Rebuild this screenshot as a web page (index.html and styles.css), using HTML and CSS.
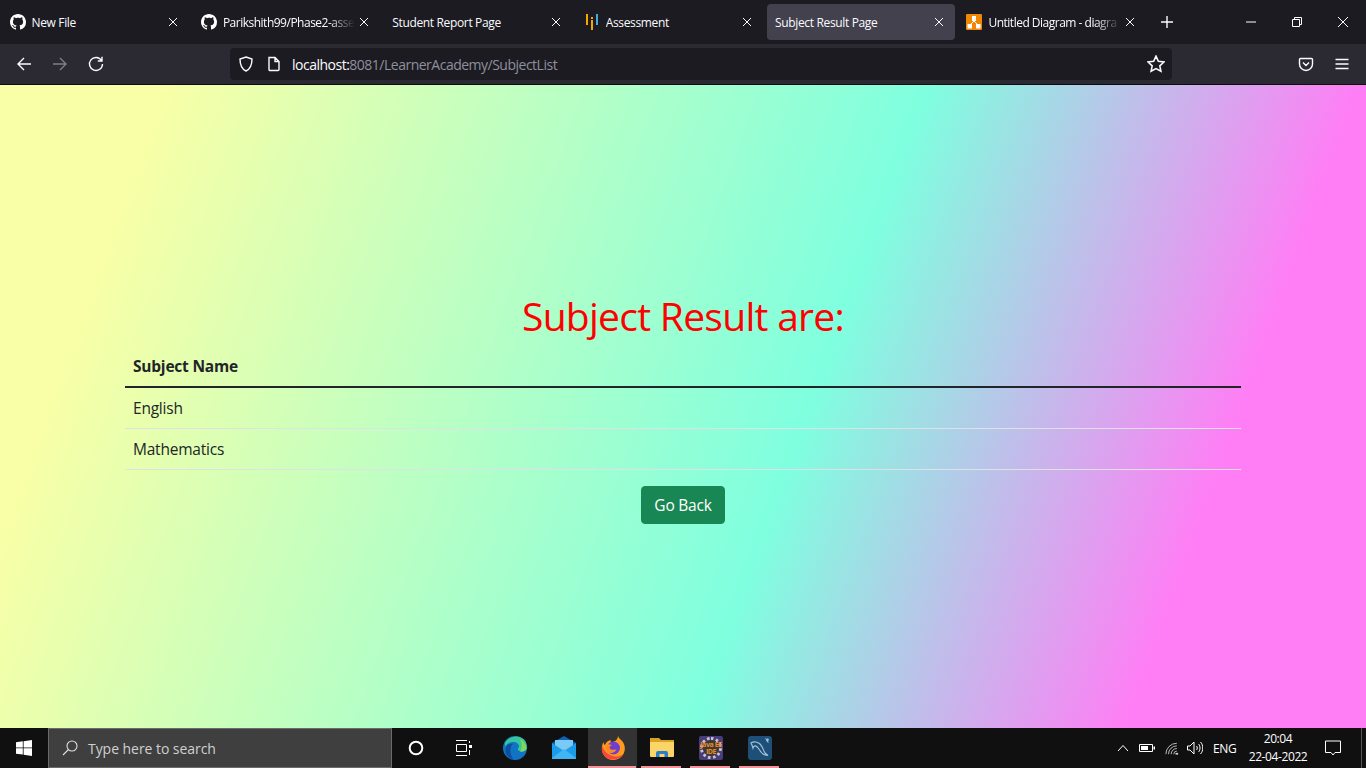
FILE: index.html
```html
<!DOCTYPE html>
<html lang="en">
<head>
  <meta charset="UTF-8">
  <meta name="viewport" content="width=device-width, initial-scale=1">
  <title>Subject Result Page</title>
  <link rel="stylesheet" href="styles.css">
</head>
<body>
  <!-- browser tabs -->
  <div class="tabbar">
    <div class="tab">
      <svg class="favicon" viewBox="0 0 16 16"><path fill="#fff" d="M8 0C3.58 0 0 3.58 0 8c0 3.54 2.29 6.53 5.47 7.59.4.07.55-.17.55-.38 0-.19-.01-.82-.01-1.49-2.01.37-2.53-.49-2.69-.94-.09-.23-.48-.94-.82-1.13-.28-.15-.68-.52-.01-.53.63-.01 1.08.58 1.23.82.72 1.21 1.87.87 2.33.66.07-.52.28-.87.51-1.07-1.78-.2-3.64-.89-3.64-3.95 0-.87.31-1.59.82-2.15-.08-.2-.36-1.02.08-2.12 0 0 .67-.21 2.2.82.64-.18 1.32-.27 2-.27.68 0 1.36.09 2 .27 1.53-1.04 2.2-.82 2.2-.82.44 1.1.16 1.92.08 2.12.51.56.82 1.27.82 2.15 0 3.07-1.87 3.75-3.65 3.95.29.25.54.73.54 1.48 0 1.07-.01 1.93-.01 2.2 0 .21.15.46.55.38A8.013 8.013 0 0016 8c0-4.42-3.58-8-8-8z"/></svg>
      <span class="tab-title">New File</span>
      <svg class="tab-close" viewBox="0 0 10 10"><path d="M1 1l8 8M9 1l-8 8"/></svg>
    </div>
    <div class="tab">
      <svg class="favicon" viewBox="0 0 16 16"><path fill="#fff" d="M8 0C3.58 0 0 3.58 0 8c0 3.54 2.29 6.53 5.47 7.59.4.07.55-.17.55-.38 0-.19-.01-.82-.01-1.49-2.01.37-2.53-.49-2.69-.94-.09-.23-.48-.94-.82-1.13-.28-.15-.68-.52-.01-.53.63-.01 1.08.58 1.23.82.72 1.21 1.87.87 2.33.66.07-.52.28-.87.51-1.07-1.78-.2-3.64-.89-3.64-3.95 0-.87.31-1.59.82-2.15-.08-.2-.36-1.02.08-2.12 0 0 .67-.21 2.2.82.64-.18 1.32-.27 2-.27.68 0 1.36.09 2 .27 1.53-1.04 2.2-.82 2.2-.82.44 1.1.16 1.92.08 2.12.51.56.82 1.27.82 2.15 0 3.07-1.87 3.75-3.65 3.95.29.25.54.73.54 1.48 0 1.07-.01 1.93-.01 2.2 0 .21.15.46.55.38A8.013 8.013 0 0016 8c0-4.42-3.58-8-8-8z"/></svg>
      <span class="tab-title fade">Parikshith99/Phase2-asse</span>
      <svg class="tab-close" viewBox="0 0 10 10"><path d="M1 1l8 8M9 1l-8 8"/></svg>
    </div>
    <div class="tab">
      <span class="tab-title">Student Report Page</span>
      <svg class="tab-close" viewBox="0 0 10 10"><path d="M1 1l8 8M9 1l-8 8"/></svg>
    </div>
    <div class="tab">
      <svg class="favicon" viewBox="0 0 16 16"><path fill="#f5a700" d="M2 0h2v11H2zM7 6h2v10H7z"/><path fill="#f5a700" d="M7 3h2v2H7z"/><path fill="#3fa9e0" d="M12 0h2v11h-2z"/></svg>
      <span class="tab-title">Assessment</span>
      <svg class="tab-close" viewBox="0 0 10 10"><path d="M1 1l8 8M9 1l-8 8"/></svg>
    </div>
    <div class="tab active">
      <span class="tab-title">Subject Result Page</span>
      <svg class="tab-close" viewBox="0 0 10 10"><path d="M1 1l8 8M9 1l-8 8"/></svg>
    </div>
    <div class="tab">
      <svg class="favicon" viewBox="0 0 16 16"><rect width="16" height="16" rx="1" fill="#f08705"/><path fill="none" stroke="#fff" d="M8 7L4 11M8 7l4 4"/><path fill="#fff" d="M6 2h4v5H6zM1.500 10h4.500v4.500H1.500zM10 10h4.500v4.500H10z"/></svg>
      <span class="tab-title fade">Untitled Diagram - diagra</span>
      <svg class="tab-close" viewBox="0 0 10 10"><path d="M1 1l8 8M9 1l-8 8"/></svg>
    </div>
    <svg class="new-tab" viewBox="0 0 12 12"><path d="M6 0v12M0 6h12"/></svg>
    <div class="window-btns">
      <svg class="win-btn" viewBox="0 0 10 10"><path d="M0 5h10"/></svg>
      <svg class="win-btn" viewBox="0 0 10 10"><path d="M.5 2.500h7v7h-7zM2.500 2.500V.5h7v7h-2"/></svg>
      <svg class="win-btn" viewBox="0 0 10 10"><path d="M0 0l10 10M10 0L0 10"/></svg>
    </div>
  </div>

  <!-- address bar -->
  <div class="toolbar">
    <div class="nav-btns">
      <svg class="tool-icon" viewBox="0 0 16 16"><path d="M15 8H2M8 2L2 8l6 6"/></svg>
      <svg class="tool-icon dim" viewBox="0 0 16 16"><path d="M1 8h13M8 2l6 6-6 6"/></svg>
      <svg class="tool-icon" viewBox="0 0 16 16"><path d="M13.500 4.500A6.500 6.500 0 1 0 14.500 8M14 .8v4.200H9.800"/></svg>
    </div>
    <div class="urlbar">
      <svg class="url-icon" viewBox="0 0 16 16"><path d="M8 1l6 2c0 6-1.500 10-6 12C3.500 13 2 9 2 3z"/></svg>
      <svg class="url-icon doc" viewBox="0 0 16 16"><path d="M3 1.500h6l4 4v8a1 1 0 0 1-1 1H4a1 1 0 0 1-1-1zM9 1.500v4h4"/></svg>
      <span class="url"><span class="url-host">localhost:</span>8081/LearnerAcademy/SubjectList</span>
      <svg class="url-icon star" viewBox="0 0 16 16"><path d="M8 1l2.100 4.600 5 .6-3.700 3.400 1 4.900L8 12.100l-4.400 2.400 1-4.900L.9 6.200l5-.6z"/></svg>
    </div>
    <div class="tool-right">
      <svg class="tool-icon" viewBox="0 0 16 16"><path d="M2.500 2.500h11a1 1 0 0 1 1 1V8a6.500 6.500 0 0 1-13 0V3.500a1 1 0 0 1 1-1zM5 6.500l3 3 3-3"/></svg>
      <svg class="tool-icon" viewBox="0 0 16 16"><path d="M1.500 3.500h13M1.500 8h13M1.500 12.500h13"/></svg>
    </div>
  </div>

  <!-- the page itself -->
  <main class="content">
    <div class="container">
      <h1 class="heading">Subject Result are:</h1>
      <table class="result-table">
        <thead>
          <tr><th>Subject Name</th></tr>
        </thead>
        <tbody>
          <tr><td>English</td></tr>
          <tr><td>Mathematics</td></tr>
        </tbody>
      </table>
      <div class="actions">
        <a class="btn-back" href="#">Go Back</a>
      </div>
    </div>
  </main>

  <!-- windows taskbar -->
  <div class="taskbar">
    <div class="start">
      <svg class="start-logo" viewBox="0 0 16 16"><path fill="#fff" d="M0 2.300l6.800-1v6.200H0zM7.600 1.200L16 0v7.500H7.600zM0 8.300h6.800v6.300L0 13.700zM7.600 8.300H16V16l-8.400-1.200z"/></svg>
    </div>
    <div class="search">
      <svg class="search-icon" viewBox="0 0 16 16"><circle cx="10" cy="6" r="5"/><path d="M6.500 9.500L1 15"/></svg>
      <span>Type here to search</span>
    </div>
    <div class="task-btn">
      <svg class="task-svg" viewBox="0 0 16 16"><circle cx="8" cy="8" r="6.300" fill="none" stroke="#fff" stroke-width="2"/></svg>
    </div>
    <div class="task-btn">
      <svg class="task-svg" viewBox="0 0 16 16"><path fill="none" stroke="#fff" d="M0 .5h11M0 15.500h11M.5 4.500h10v7H.5z"/><path fill="#fff" d="M13 5h3v3h-3z"/><path stroke="#fff" d="M13.500 1v2M13.500 10v5"/></svg>
    </div>
    <div class="app-list">
      <div class="app">
        <svg class="app-icon" viewBox="0 0 24 24">
          <circle cx="12" cy="12" r="12" fill="#1173c4"/>
          <path fill="#36c3a0" d="M2 7C5 1 13-1 19 2c4 2 5.500 7 4.500 11-1 2-4 3-7 2-2-.7-2-2.500-.5-4 .5-3-3-5.500-6.500-5C6 6.500 3.500 8 2 11z"/>
          <path fill="#7ed957" d="M17 3c4 2 6.500 6 6.500 10-1 2-4 3-6.500 2.500 2-2 2.500-8 0-12.500z"/>
          <path fill="#0b4f9e" d="M10 23C4 22 1 16 3 11c1.500-3 5-4 7-3-3 2-4 8 0 15z"/>
        </svg>
      </div>
      <div class="app">
        <svg class="app-icon" viewBox="0 0 24 24">
          <path fill="#0a64b5" d="M12 0l12 7v3H0V7z"/>
          <path fill="#7cc9f5" d="M3 4h18v11H3z"/>
          <path fill="#1c9be8" d="M0 7l12 8 12-8v15a1 1 0 0 1-1 1H1a1 1 0 0 1-1-1z"/>
          <path fill="#40b4f5" d="M0 22L12 13l12 9v1H0z"/>
        </svg>
      </div>
      <div class="app running active">
        <svg class="app-icon" viewBox="0 0 24 24">
          <path fill="#ff9a1f" d="M17 0c1 3 4 4 5.500 7 2.500 5 1.500 11-3 14.500-5 4-12 3-16-1.500C0 16 .5 9.500 2.500 6c0 1.500.5 2.500 1.500 3C5 6 7.500 4.500 10 4c-1 1.500 0 2 1 2 3 0 6-3 6-6z"/>
          <path fill="#f9463f" d="M1 10c-1 5 1 10 6 12.500 6 2.500 12 .5 15-4-3 2-8 3-12 1S3 15 1 10z"/>
          <circle cx="12.500" cy="12" r="6.500" fill="#6d3fd0"/>
          <path fill="#ff8a1f" d="M5 9c2-1 4-1 6 .5-2 0-2.500 1.500-2.500 2.500 1 2 5 2.500 7 1-1 3.500-5 5-8 3.500C4 14.500 4 11 5 9z"/>
        </svg>
      </div>
      <div class="app running">
        <svg class="app-icon" viewBox="0 0 24 24">
          <path fill="#d9a520" d="M0 2h9l2 2h13v4H0z"/>
          <path fill="#fbd568" d="M0 6h24v14a1 1 0 0 1-1 1H1a1 1 0 0 1-1-1z"/>
          <path fill="#2a7fc9" d="M6 17a2 2 0 0 1 2-2h8a2 2 0 0 1 2 2v4h-3.500v-3h-5v3H6z"/>
        </svg>
      </div>
      <div class="app running">
        <svg class="app-icon" viewBox="0 0 24 24">
          <rect width="24" height="24" rx="2" fill="#4a3c78"/>
          <path fill="none" stroke="#c8c8c8" stroke-width="3" stroke-dasharray="2.500 2.500" d="M12 2.500a9.500 9.500 0 1 1-.01 0z"/>
          <circle cx="12" cy="12" r="8" fill="#3a3a3a"/>
          <text class="ee-text" x="12" y="11">Java EE</text>
          <text class="ee-text" x="12" y="18">IDE</text>
        </svg>
      </div>
      <div class="app running">
        <svg class="app-icon" viewBox="0 0 24 24">
          <rect width="24" height="24" rx="3" fill="#1d4f78"/>
          <path fill="none" stroke="#9fc0d8" stroke-width="1.200" d="M3 7c3-2 7-1 9 1 3 3 3 6 5 9 1 1 2 2 3 2.500-3 0-5-1-6.500-3-1.500-2-1-1-3-4C8 9 6 9 5 12c-.5-2-1-3-2-5z"/>
          <path fill="#9fc0d8" d="M17 2l2 1 1-1 1 2-1 1 1 2-2-1-1-2z"/>
        </svg>
      </div>
    </div>
    <div class="tray">
      <svg class="tray-icon chev" viewBox="0 0 12 8"><path d="M1 7l5-5.500L11 7"/></svg>
      <svg class="tray-icon batt" viewBox="0 0 16 10"><path d="M.5 1.500h13v7H.5z"/><path class="solid" d="M2 3h7v4H2zM14.500 3.500H16v3h-1.500z"/></svg>
      <svg class="tray-icon wifi" viewBox="0 0 16 14"><path d="M1 13.500A12.500 12.500 0 0 1 13.500 1M4 13.500A9.500 9.500 0 0 1 13.500 4M7 13.500A6.500 6.500 0 0 1 13.500 7M10 13.500a3.500 3.500 0 0 1 3.500-3.500"/><path class="solid" d="M12 12h3v2h-3z"/></svg>
      <svg class="tray-icon vol" viewBox="0 0 16 14"><path d="M.5 5h2.500l4-4v12l-4-4H.5zM9.500 5c1 1 1 3 0 4M11.500 3c2 2 2 6 0 8M13.500 1c3 3 3 9 0 12"/></svg>
      <span class="lang">ENG</span>
      <div class="clock">
        <span>20:04</span>
        <span>22-04-2022</span>
      </div>
      <svg class="tray-icon notif" viewBox="0 0 16 16"><path d="M.5 1h15v11.500H10L8 15l-2-2.500H.5z"/></svg>
      <div class="show-desktop"></div>
    </div>
  </div>
</body>
</html>
```

FILE: styles.css
```css
* {
  box-sizing: border-box;
}

html,
body {
  height: 100%;
}

body {
  margin: 0;
  display: flex;
  flex-direction: column;
  overflow: hidden;
  font-family: "Open Sans", "Noto Sans", sans-serif;
  background-color: #1c1b22;
}

/* tabs */
.tabbar {
  height: 44px;
  flex: none;
  display: flex;
  align-items: center;
  padding-left: 1.5px;
  gap: 3.4px;
  background-color: #1c1b22;
  color: #fbfbfe;
  font-size: 12px;
}

.tab {
  width: 188px;
  height: 36px;
  flex: none;
  display: flex;
  align-items: center;
  padding: 0 11.5px 0 8px;
  border-radius: 4px;
}

.tab.active {
  background-color: #42414d;
}

.favicon {
  width: 16px;
  height: 16px;
  flex: none;
  margin-right: 6px;
}

.tab-title {
  flex: 1;
  min-width: 0;
  overflow: hidden;
  white-space: nowrap;
  letter-spacing: -0.35px;
}

.tab-title.fade {
  letter-spacing: -0.5px;
  -webkit-mask-image: linear-gradient(to right, #000 80%, transparent 100%);
  mask-image: linear-gradient(to right, #000 80%, transparent 100%);
}

.tab-close {
  width: 10px;
  height: 10px;
  flex: none;
  margin-left: 4px;
  fill: none;
  stroke: #fbfbfe;
  stroke-width: 1;
}

.new-tab {
  width: 12px;
  height: 12px;
  flex: none;
  margin-left: 11px;
  fill: none;
  stroke: #fbfbfe;
  stroke-width: 1.4;
}

.window-btns {
  margin-left: auto;
  display: flex;
  height: 100%;
}

.win-btn {
  width: 10px;
  height: 100%;
  margin: 0 18px;
  fill: none;
  stroke: #fff;
  stroke-width: 1;
}

/* address bar */
.toolbar {
  height: 41px;
  flex: none;
  display: flex;
  align-items: center;
  background-color: #2b2a33;
  border-bottom: 1px solid #0c0c0d;
}

.nav-btns {
  width: 230px;
  flex: none;
  display: flex;
  align-items: center;
  padding-left: 16px;
  gap: 20px;
}

.tool-icon {
  width: 16px;
  height: 16px;
  flex: none;
  fill: none;
  stroke: #fbfbfe;
  stroke-width: 1.4;
}

.tool-icon.dim {
  opacity: 0.4;
}

.urlbar {
  width: 942px;
  height: 32px;
  flex: none;
  display: flex;
  align-items: center;
  padding: 0 8px;
  border-radius: 4px;
  background-color: #1c1b22;
  font-size: 14px;
  color: #8f8f9d;
}

.url-icon {
  width: 16px;
  height: 16px;
  flex: none;
  fill: none;
  stroke: #fbfbfe;
  stroke-width: 1.4;
}

.url-icon.doc {
  margin-left: 12px;
  margin-right: 10px;
}

.url-icon.star {
  width: 18px;
  height: 18px;
  margin-left: auto;
  margin-right: -1px;
}

.url {
  letter-spacing: -0.5px;
}

.url-host {
  color: #fbfbfe;
}

.tool-right {
  flex: 1;
  display: flex;
  align-items: center;
  justify-content: flex-end;
  gap: 20px;
  padding-right: 16px;
}

/* page */
.content {
  flex: 1;
  min-height: 0;
  background-image: linear-gradient(110deg, #f9ffa6 10%, #7fffdf 58%, #ff7ef5 85%);
  color: #212529;
}

.container {
  width: 1140px;
  margin: 0 auto;
  padding: 207px 12px 0;
}

.heading {
  margin: 0 0 6px;
  font-size: 39px;
  font-weight: 400;
  line-height: 48px;
  letter-spacing: -0.72px;
  text-align: center;
  color: #f00;
}

.result-table {
  width: 100%;
  margin-bottom: 16px;
  border-collapse: collapse;
  font-size: 15.5px;
  letter-spacing: -0.22px;
}

.result-table th,
.result-table td {
  height: 41px;
  padding: 8px;
  text-align: left;
  line-height: 24px;
}

.result-table th {
  border-bottom: 2px solid #212529;
}

.result-table td {
  border-bottom: 1px solid #dee2e6;
}

.actions {
  display: flex;
  justify-content: center;
}

.btn-back {
  width: 84px;
  padding: 6px 0;
  border: 1px solid #198754;
  border-radius: 4px;
  background-color: #198754;
  color: #fff;
  font-size: 15.5px;
  line-height: 24px;
  letter-spacing: -0.22px;
  text-align: center;
  text-decoration: none;
}

/* taskbar */
.taskbar {
  height: 40px;
  flex: none;
  display: flex;
  align-items: center;
  background-color: #101010;
  color: #fff;
}

.start {
  width: 48px;
  flex: none;
  display: flex;
  justify-content: center;
}

.start-logo {
  width: 16px;
  height: 16px;
}

.search {
  width: 344px;
  height: 40px;
  flex: none;
  display: flex;
  align-items: center;
  gap: 10px;
  padding-left: 13px;
  background-color: #3f3f3f;
  border: 1px solid #6b6b6b;
  color: #d0d0d0;
  font-size: 14px;
  letter-spacing: -0.05px;
}

.search-icon {
  width: 16px;
  height: 16px;
  flex: none;
  fill: none;
  stroke: #e0e0e0;
  stroke-width: 1.1;
}

.task-btn {
  width: 48px;
  height: 100%;
  flex: none;
  display: flex;
  align-items: center;
  justify-content: center;
}

.task-svg {
  width: 16px;
  height: 16px;
}

.app-list {
  display: flex;
  height: 100%;
  margin-left: 2px;
}

.app {
  position: relative;
  width: 49px;
  height: 100%;
  flex: none;
  display: flex;
  align-items: center;
  justify-content: center;
}

.app.active {
  background-color: #333;
}

.app.running::after {
  content: "";
  position: absolute;
  left: 4px;
  right: 5px;
  bottom: 0;
  height: 2px;
  background-color: #f4929a;
}

.app.active::after {
  left: 0;
  right: 1px;
}

.app-icon {
  width: 24px;
  height: 24px;
}

.ee-text {
  font-size: 7px;
  font-weight: 700;
  fill: #f08a24;
  text-anchor: middle;
  letter-spacing: -0.4px;
}

.tray {
  margin-left: auto;
  height: 100%;
  display: flex;
  align-items: center;
}

.tray-icon {
  flex: none;
  fill: none;
  stroke: #fff;
  stroke-width: 1;
}

.tray-icon .solid {
  fill: #fff;
  stroke: none;
}

.chev {
  width: 12px;
  height: 8px;
}

.batt {
  width: 16px;
  height: 10px;
  margin-left: 10px;
}

.wifi {
  width: 14px;
  height: 13px;
  margin-left: 10px;
  opacity: 0.8;
}

.vol {
  width: 16px;
  height: 14px;
  margin-left: 8px;
}

.lang {
  width: 24px;
  margin-left: 10px;
  font-size: 12px;
  letter-spacing: -0.4px;
}

.clock {
  width: 72px;
  margin-left: 5px;
  display: flex;
  flex-direction: column;
  align-items: center;
  font-size: 12px;
  line-height: 18px;
  letter-spacing: -0.4px;
}

.notif {
  width: 16px;
  height: 16px;
  margin-left: 11px;
}

.show-desktop {
  width: 5px;
  height: 100%;
  margin-left: 20px;
  border-left: 1px solid #555;
}
```
